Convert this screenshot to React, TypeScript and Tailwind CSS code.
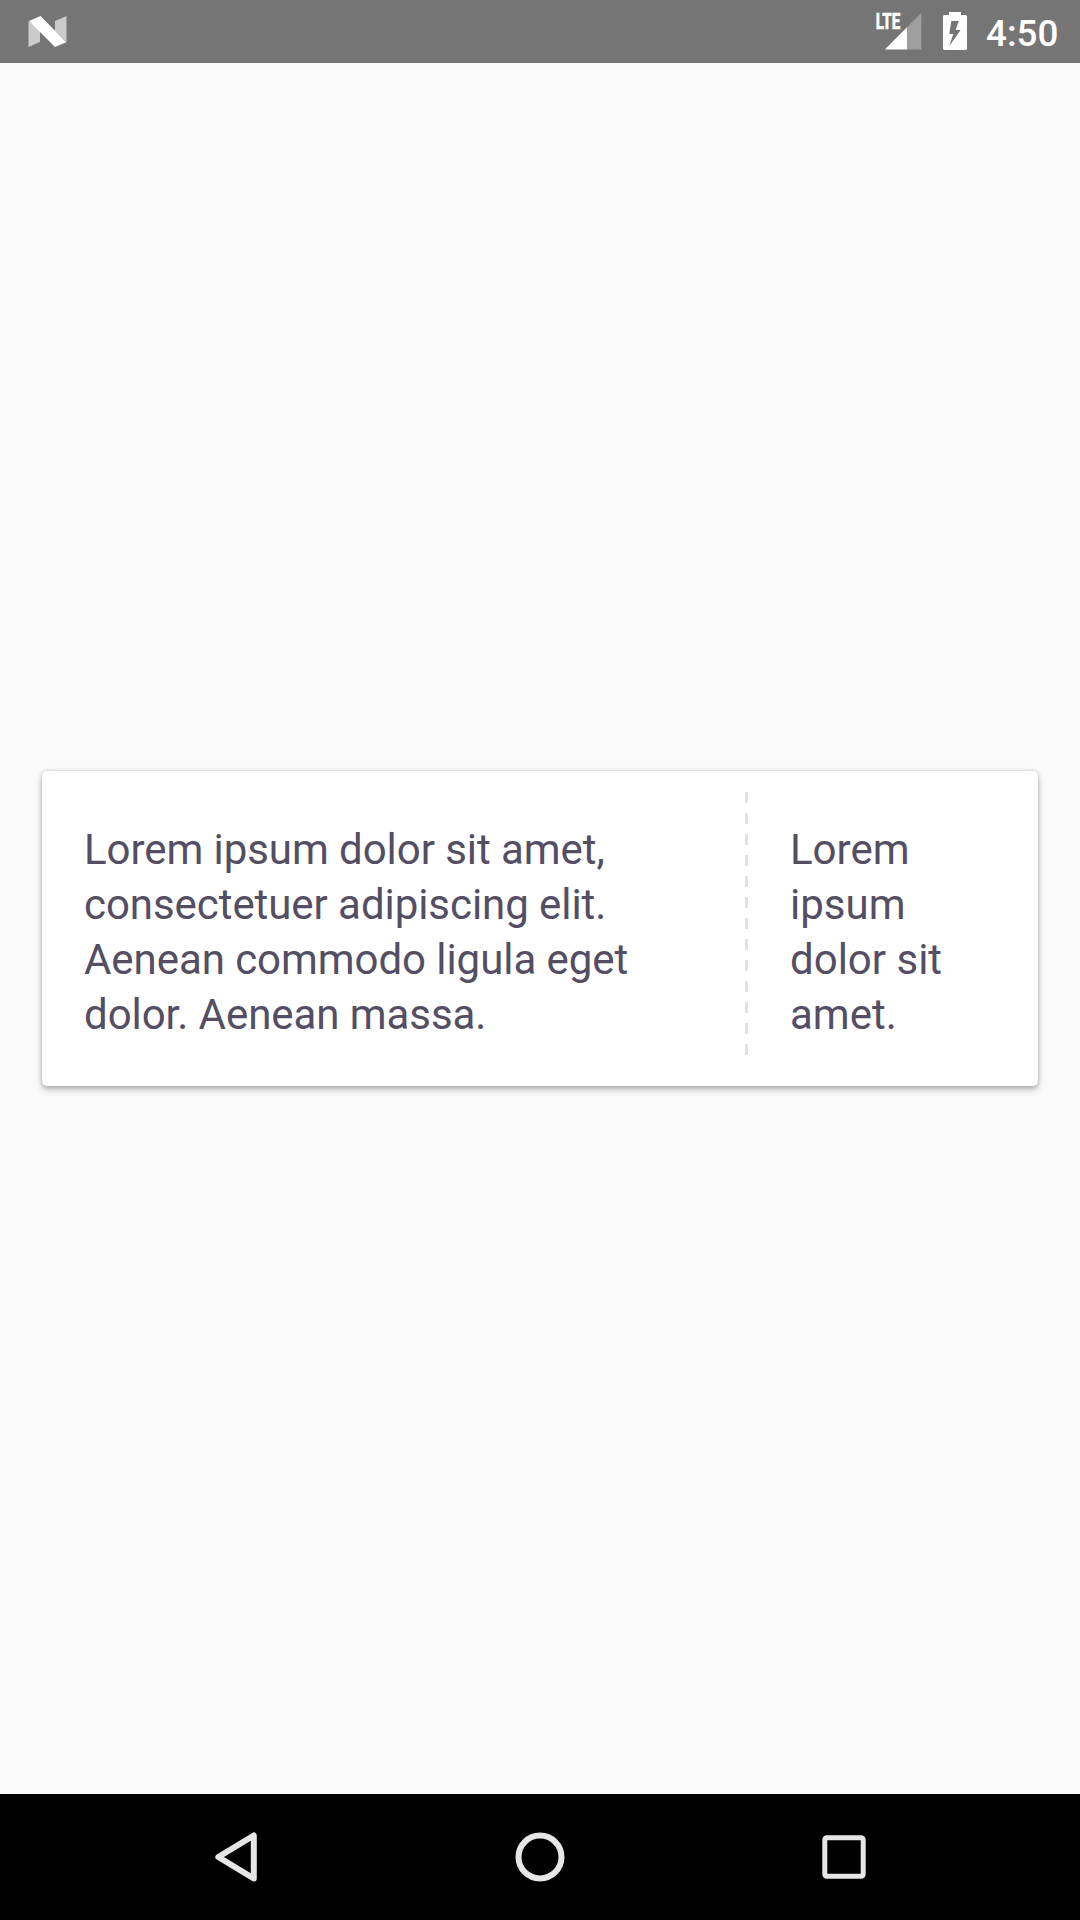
function StatusBar() {
  return (
    <header className="flex h-[63px] shrink-0 items-center justify-between bg-[#757575]">
      <svg className="ml-[28px] h-[63px] w-[40px]" viewBox="28 0 40 63">
        <path d="M28.5 21L40 30V42L28.5 47Z" fill="#cbcbcb" />
        <path d="M66.5 16L55 21V31L66.5 42Z" fill="#cbcbcb" />
        <path d="M29 21L40.5 16L66.3 42.3L55 47Z" fill="#fff" />
      </svg>
      <div className="flex h-full items-center pr-[21px]">
        <svg className="h-[63px] w-[48px]" viewBox="875 0 48 63">
          <path d="M921.3 13V49.500H907V27.300Z" fill="#9f9f9f" />
          <path d="M907 27.300V49.500H884.800Z" fill="#fff" />
          <text
            x="875.700"
            y="28.800"
            fill="#fff"
            stroke="#fff"
            strokeWidth="0.7"
            fontFamily="Roboto, sans-serif"
            fontWeight="700"
            fontSize="21.3"
            textLength="24.500"
            lengthAdjust="spacingAndGlyphs"
          >
            LTE
          </text>
        </svg>
        <svg className="ml-5 h-[63px] w-[24px]" viewBox="943 0 24 63">
          <path
            fillRule="evenodd"
            fill="#fff"
            d="M949 12H961V15H965.5Q967 15 967 16.5V48.5Q967 50 965.5 50H944.500Q943 50 943 48.500V16.500Q943 15 944.500 15H949ZM951.300 21L949.300 34H953.300L949.300 46L960.600 30H955.600L958.800 21Z"
          />
        </svg>
        <span className="mt-[3px] ml-[19px] h-[43px] w-[73px] whitespace-nowrap text-[36.75px] leading-[43px] font-medium text-white">
          4:50
        </span>
      </div>
    </header>
  );
}

function TicketCard() {
  return (
    <section className="mt-[708px] ml-[42px] flex h-[315px] w-[996px] shrink-0 rounded-[5px] bg-white text-[42px] leading-[55px] text-[#534e63] shadow-[0_0_4px_rgba(0,0,0,0.18),0_4px_6px_rgba(0,0,0,0.24)]">
      <p className="w-[703px] pt-[51px] pl-[42px] tracking-[-0.06px]">
        Lorem ipsum dolor sit amet,
        <br />
        consectetuer adipiscing elit.
        <br />
        Aenean commodo ligula eget
        <br />
        dolor. Aenean massa.
      </p>
      <div className="mt-[21px] h-[263px] w-[3px] bg-[repeating-linear-gradient(to_bottom,#e3e2e7_0px,#e3e2e7_11px,transparent_11px,transparent_21px)]" />
      <p className="pt-[51px] pl-[42px]">
        Lorem
        <br />
        ipsum
        <br />
        dolor sit
        <br />
        amet.
      </p>
    </section>
  );
}

function NavBar() {
  return (
    <nav className="mt-auto flex h-[126px] shrink-0 items-center justify-between bg-black pr-[206px] pl-[206px]">
      <svg className="size-[60px]" viewBox="206 1827 60 60" fill="none" stroke="#e6e6e6" strokeWidth="6" strokeLinejoin="round">
        <path d="M253.800 1835.500V1878.500L218.300 1857Z" />
      </svg>
      <svg className="size-[60px]" viewBox="510 1827 60 60" fill="none" stroke="#e6e6e6" strokeWidth="6">
        <circle cx="540" cy="1857" r="21.500" />
      </svg>
      <svg className="size-[60px]" viewBox="814 1827 60 60" fill="none" stroke="#e6e6e6" strokeWidth="5">
        <rect x="824.800" y="1837.800" width="38.400" height="38.400" rx="2" />
      </svg>
    </nav>
  );
}

export default function App() {
  return (
    <main className="flex h-[1920px] w-[1080px] flex-col overflow-hidden bg-[#fafafa] font-['Roboto',sans-serif]">
      <StatusBar />
      <TicketCard />
      <NavBar />
    </main>
  );
}
